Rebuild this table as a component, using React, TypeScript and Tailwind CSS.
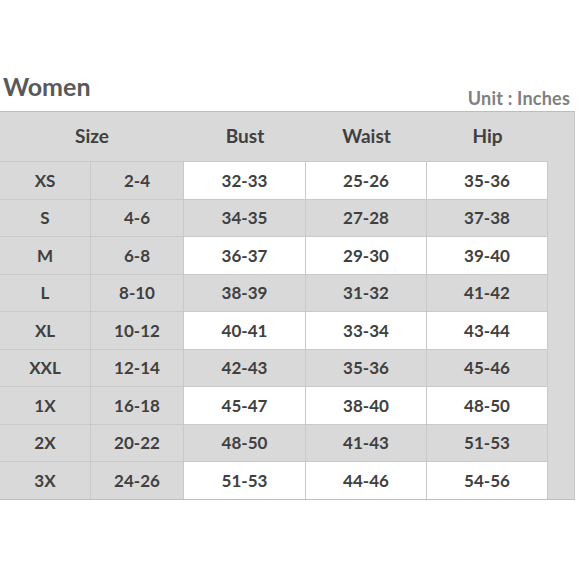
import React from "react";

const rows = [
  ["XS", "2-4", "32-33", "25-26", "35-36"],
  ["S", "4-6", "34-35", "27-28", "37-38"],
  ["M", "6-8", "36-37", "29-30", "39-40"],
  ["L", "8-10", "38-39", "31-32", "41-42"],
  ["XL", "10-12", "40-41", "33-34", "43-44"],
  ["XXL", "12-14", "42-43", "35-36", "45-46"],
  ["1X", "16-18", "45-47", "38-40", "48-50"],
  ["2X", "20-22", "48-50", "41-43", "51-53"],
  ["3X", "24-26", "51-53", "44-46", "54-56"],
];

export default function App() {
  return (
    <div
      className="w-[580px] h-[580px] bg-white pt-[71px] overflow-hidden"
      style={{ fontFamily: 'Lato, "Open Sans", "Liberation Sans", sans-serif' }}
    >
      <div className="flex justify-between items-end h-[40px] pl-[3px] pr-[10px]">
        <div className="text-[25px] leading-[30px] font-bold text-[#595959] mb-[10px]">Women</div>
        <div className="text-[18px] leading-[20px] font-bold text-[#808080] mb-[3px] tracking-[0.2px]">Unit : Inches</div>
      </div>
      <div className="w-[575px] border-t border-b border-[#bdbdbd] bg-[#d9d9d9] grid grid-cols-[91px_93px_122px_121px_121px_27px] grid-rows-[49px_repeat(9,37.5px)] text-[#404040] font-bold text-[17px]">
        <div className="col-span-2 flex items-center justify-center text-[19px]">Size</div>
        <div className="flex items-center justify-center text-[19px]">Bust</div>
        <div className="flex items-center justify-center text-[19px]">Waist</div>
        <div className="flex items-center justify-center text-[19px]">Hip</div>
        <div className="border-r border-[#c4c4c4]" style={{ gridColumn: 6, gridRow: "1 / span 10" }} />
        {rows.map((r, i) => {
          const white = i % 2 === 0;
          return (
            <React.Fragment key={r[0]}>
              <div className="border-t border-r border-[#c9c9c9] flex items-center justify-center">{r[0]}</div>
              <div className="border-t border-r border-[#c9c9c9] flex items-center justify-center">{r[1]}</div>
              {r.slice(2).map((v, j) => (
                <div
                  key={j}
                  className={
                    "border-t border-r border-[#c9c9c9] flex items-center justify-center " +
                    (white ? "bg-white" : "bg-[#d9d9d9]")
                  }
                >
                  {v}
                </div>
              ))}
            </React.Fragment>
          );
        })}
      </div>
    </div>
  );
}
